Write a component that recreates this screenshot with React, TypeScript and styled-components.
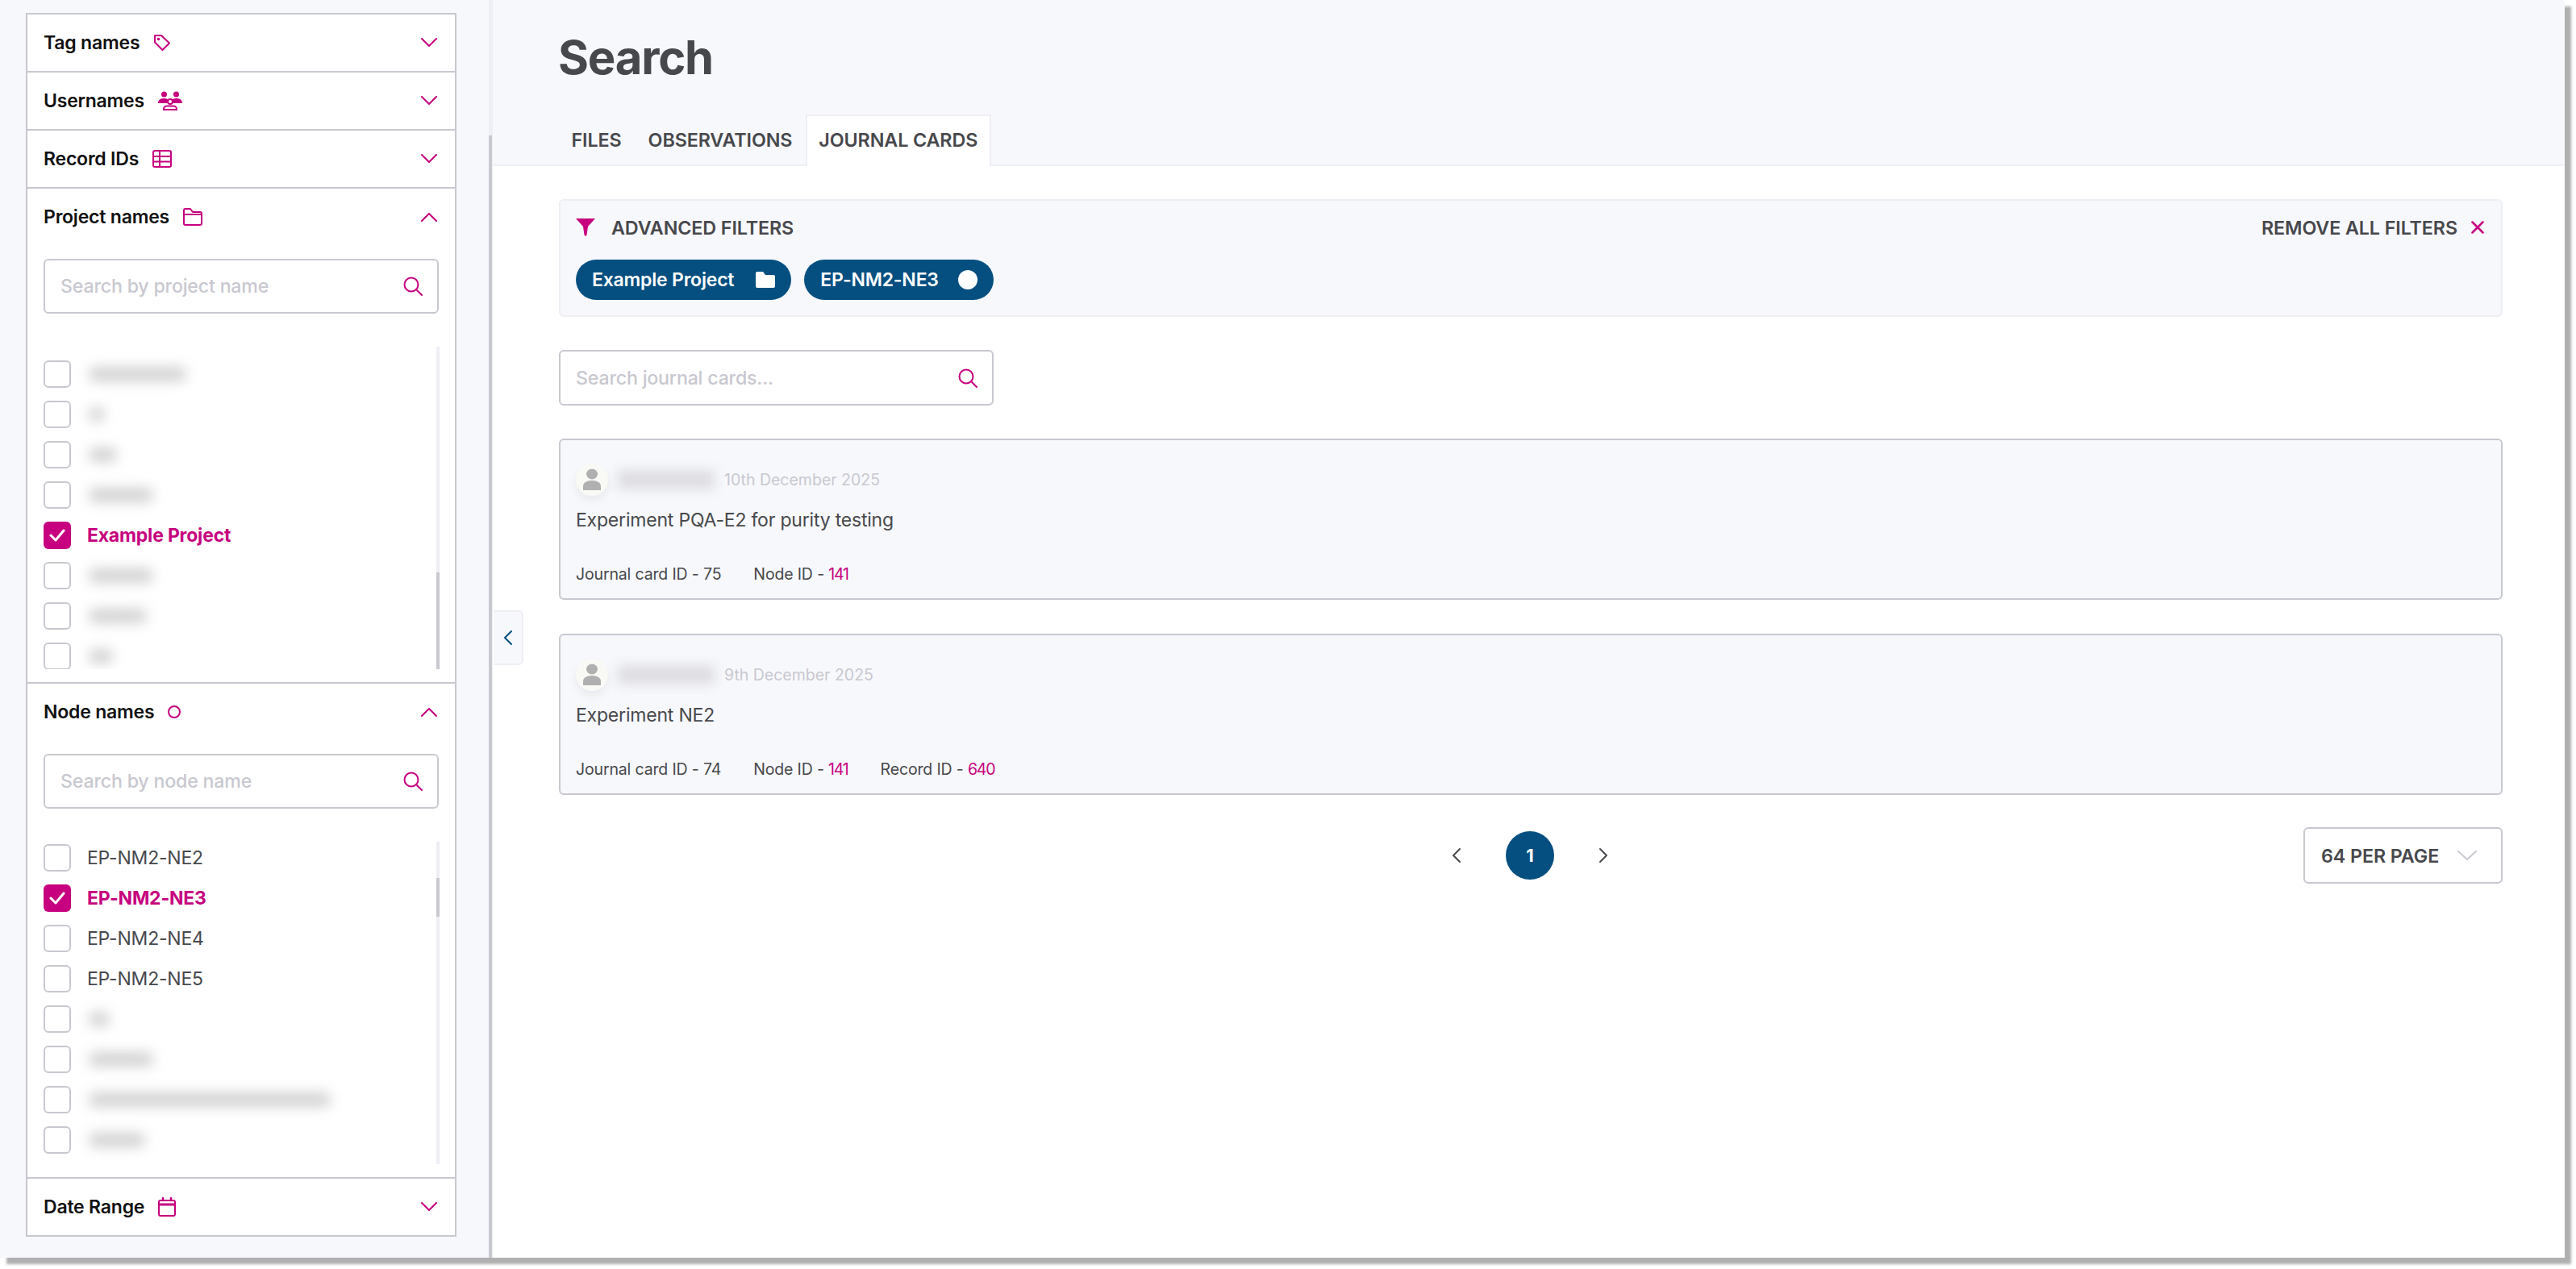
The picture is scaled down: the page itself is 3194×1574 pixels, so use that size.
import React, {FC, ReactNode} from 'react'
import styled, {createGlobalStyle} from 'styled-components'

const MAGENTA = '#c6007e'
const BLUE = '#054f80'
const INK = '#47484c'
const LINE = '#c8c8d0'
const SOFT = '#eeeef4'
const TINT = '#f7f8fc'
const FONT = `Inter, "Open Sans", "Liberation Sans", sans-serif`

const GlobalStyle = createGlobalStyle`
html, body {
  margin:0;
  padding:0;
  background:#fff;
  font-family:${FONT};
  color:${INK};
}
* {
  box-sizing:border-box;
}
`

const Page = styled.div`
width:3194px;
height:1574px;
background:#fff;
`

const Window = styled.div`
position:relative;
display:flex;
width:3180px;
height:1560px;
background:#fff;
box-shadow:8px 8px 3px #b0b0b0;
`

const Sidebar = styled.aside`
width:606px;
flex:none;
padding:16px 40px 0 32px;
background:${TINT};
`

const PageTrack = styled.div`
width:5px;
flex:none;
background:${SOFT};
padding-top:168px;
div {
  width:4px;
  height:100%;
  background:${LINE};
}
`

const Accordion = styled.div`
width:534px;
border:2px solid ${LINE};
background:#fff;
`

const Section = styled.section`
& + & {
  border-top:2px solid ${LINE};
}
`

const SectionHeader = styled.header`
height:70px;
padding:0 22px 0 20px;
display:flex;
align-items:center;
font-size:23px;
font-weight:600;
letter-spacing:-0.2px;
color:#111;
span {
  margin:0 17px 1px 0;
}
svg.chevron {
  margin-left:auto;
}
`

const Panel = styled.div`
padding:17px 20px 16px;
`

const SearchBox = styled.label<{$width?: number; $height?: number; $top?: number}>`
display:flex;
align-items:center;
width:${p => p.$width ? `${p.$width}px` : '100%'};
height:${p => p.$height || 68}px;
margin-top:${p => p.$top || 0}px;
padding:0 18px 0 19px;
border:2px solid ${LINE};
border-radius:6px;
background:#fff;
input {
  flex:1;
  min-width:0;
  padding:0;
  border:none;
  outline:none;
  background:none;
  font-family:${FONT};
  font-size:23.2px;
  font-weight:500;
  letter-spacing:-0.2px;
  &::placeholder {
    color:${LINE};
    opacity:1;
  }
}
`

const ListWrap = styled.div`
display:flex;
height:400px;
margin-top:41px;
margin-right:-1px;
`

const Rows = styled.ul<{$top: number}>`
flex:1;
margin:0;
padding:${p => p.$top}px 0 0;
list-style:none;
display:flex;
flex-direction:column;
gap:16px;
overflow:hidden;
`

const Row = styled.li<{$on?: boolean}>`
display:flex;
align-items:center;
gap:20px;
height:34px;
font-size:23px;
letter-spacing:-0.2px;
font-weight:${p => p.$on ? 700 : 400};
color:${p => p.$on ? MAGENTA : INK};
`

const Box = styled.span<{$on?: boolean}>`
width:34px;
height:34px;
flex:none;
display:flex;
align-items:center;
justify-content:center;
border-radius:6px;
border:${p => p.$on ? 'none' : `2px solid ${LINE}`};
background:${p => p.$on ? MAGENTA : '#fff'};
`

const Blurred = styled.span<{$w: number}>`
display:block;
width:${p => p.$w}px;
height:18px;
margin-left:2px;
border-radius:8px;
background:#d2d2d2;
filter:blur(8px);
`

const Track = styled.div<{$top: number}>`
width:4px;
flex:none;
background:${SOFT};
padding-top:${p => p.$top}px;
`

const Thumb = styled.div<{$h: number}>`
height:${p => p.$h}px;
background:${LINE};
`

const CollapseTab = styled.button`
position:absolute;
left:612px;
top:757px;
width:37px;
height:68px;
padding:0;
display:flex;
align-items:center;
justify-content:center;
background:${TINT};
border:2px solid ${SOFT};
border-left:none;
border-radius:0 6px 6px 0;
`

const Main = styled.main`
flex:1;
min-width:0;
`

const PageHeader = styled.header`
height:206px;
padding:36px 0 0 81px;
background:${TINT};
border-bottom:2px solid ${SOFT};
`

const Title = styled.h1`
margin:0 0 36px;
font-size:58px;
line-height:70px;
font-weight:700;
letter-spacing:-1.2px;
color:${INK};
`

const Tabs = styled.nav`
display:flex;
height:64px;
`

const Tab = styled.div<{$active?: boolean}>`
height:64px;
padding:0 14.5px 3px;
display:flex;
align-items:center;
font-size:23.3px;
font-weight:600;
letter-spacing:-0.1px;
border:2px solid ${p => p.$active ? SOFT : 'transparent'};
border-bottom:none;
background:${p => p.$active ? '#fff' : 'transparent'};
`

const Content = styled.div`
padding:41px 77px 0 82px;
`

const FilterPanel = styled.div`
height:146px;
padding:17px 19px 0;
background:${TINT};
border:2px solid ${SOFT};
border-radius:6px;
`

const FilterTop = styled.div`
display:flex;
align-items:center;
justify-content:space-between;
height:32px;
font-size:23.3px;
font-weight:600;
letter-spacing:-0.1px;
`

const FilterLabel = styled.div`
display:flex;
align-items:center;
gap:20px;
`

const RemoveAll = styled.div`
display:flex;
align-items:center;
gap:17px;
margin-right:2px;
`

const Chips = styled.div`
display:flex;
gap:16px;
margin-top:24px;
`

const Chip = styled.div<{$gap: number}>`
display:flex;
align-items:center;
gap:${p => p.$gap}px;
height:50px;
padding:0 20px;
border-radius:25px;
background:${BLUE};
color:#fff;
font-size:23px;
font-weight:600;
letter-spacing:-0.2px;
`

const CardList = styled.div`
display:flex;
flex-direction:column;
gap:42px;
margin-top:41px;
`

const Card = styled.article`
height:200px;
padding:29px 19px 0;
background:${TINT};
border:2px solid ${LINE};
border-radius:6px;
`

const CardTop = styled.div`
display:flex;
align-items:center;
height:40px;
`

const Avatar = styled.div`
width:40px;
height:40px;
flex:none;
display:flex;
align-items:center;
justify-content:center;
border-radius:50%;
background:#f9f9f5;
box-shadow:0 6px 12px rgba(0,0,0,.06);
`

const UserName = styled.div`
width:120px;
height:24px;
margin:0 12px;
background:#dedee2;
filter:blur(7px);
`

const CardDate = styled.span`
font-size:19.5px;
color:${LINE};
`

const CardTitle = styled.div`
margin-top:13px;
font-size:23px;
line-height:34px;
letter-spacing:-0.2px;
`

const CardMeta = styled.div`
display:flex;
gap:40px;
margin-top:36px;
font-size:19.5px;
line-height:28px;
letter-spacing:-0.15px;
b {
  font-weight:400;
  letter-spacing:-1.2px;
  color:${MAGENTA};
}
`

const PagerRow = styled.div`
display:grid;
grid-template-columns:1fr auto 1fr;
align-items:center;
margin-top:40px;
height:70px;
`

const Pager = styled.div`
grid-column:2;
display:flex;
align-items:center;
gap:55px;
margin-right:2px;
`

const PageDot = styled.div`
width:60px;
height:60px;
display:flex;
align-items:center;
justify-content:center;
border-radius:50%;
background:${BLUE};
color:#fff;
font-size:22px;
font-weight:700;
`

const PerPage = styled.div`
justify-self:end;
width:247px;
height:70px;
padding:0 30px 0 20px;
display:flex;
align-items:center;
justify-content:space-between;
border:2px solid ${LINE};
border-radius:6px;
font-size:23.3px;
font-weight:600;
letter-spacing:-0.1px;
`

const Svg = styled.svg`
flex:none;
`

const Stroke: FC<{w: number; h: number; color?: string; sw?: number; className?: string; children: ReactNode}> = ({w, h, color = MAGENTA, sw = 2, className, children}) => (
  <Svg className={className} width={w} height={h} viewBox={`0 0 ${w} ${h}`} fill='none' stroke={color} strokeWidth={sw} strokeLinecap='round' strokeLinejoin='round'>
    {children}
  </Svg>
)

const Chevron: FC<{up?: boolean}> = ({up}) => (
  <Stroke className='chevron' w={20} h={12}>
    <path d={up ? 'M1 11 10 2l9 9' : 'M1 1l9 9 9-9'} />
  </Stroke>
)

const TagIcon = () => (
  <Stroke w={22} h={22}>
    <path d='M2 2h8l10 9.5-8.500 8.500L2 10.500z' />
    <circle cx={6.5} cy={6.5} r={0.8} fill={MAGENTA} />
  </Stroke>
)

const UsersIcon = () => (
  <Svg width={30} height={24} viewBox='0 0 30 24'>
    <g fill={MAGENTA}>
      <circle cx={7.5} cy={4} r={3.5} />
      <circle cx={22.5} cy={4} r={3.5} />
      <path d='M0 15c0-4 3-6 7-6s5 1 5.5 2a5 5 0 0 0-1.5 4z' />
      <path d='M30 15c0-4-3-6-7-6s-5 1-5.5 2a5 5 0 0 1 1.5 4z' />
    </g>
    <g fill='none' stroke={MAGENTA} strokeWidth={2}>
      <circle cx={15} cy={13} r={3} />
      <path d='M7 23v-1c0-2 2-3.5 4-3.5h8c2 0 4 1.5 4 3.5v1z' />
    </g>
  </Svg>
)

const TableIcon = () => (
  <Stroke w={24} h={22}>
    <rect x={1} y={1} width={22} height={20} rx={2} />
    <path d='M9 1v20M1 8h22M1 14.5h22' />
  </Stroke>
)

const FolderIcon = () => (
  <Stroke w={24} h={22}>
    <path d='M1 3a2 2 0 0 1 2-2h6l3 4h9a2 2 0 0 1 2 2v12a2 2 0 0 1-2 2H3a2 2 0 0 1-2-2z' />
    <path d='M1 8h22' />
  </Stroke>
)

const CircleIcon = () => (
  <Stroke w={16} h={16}>
    <circle cx={8} cy={8} r={7} />
  </Stroke>
)

const CalendarIcon = () => (
  <Stroke w={22} h={24}>
    <rect x={1} y={4} width={20} height={19} rx={2} />
    <path d='M1 9h20' strokeWidth={3} />
    <path d='M6 1v3M16 1v3' strokeWidth={2.5} />
  </Stroke>
)

const SearchIcon = () => (
  <Stroke w={24} h={24}>
    <circle cx={10} cy={10} r={8.5} />
    <path d='M16 16l7 7' />
  </Stroke>
)

const CheckIcon = () => (
  <Stroke w={20} h={16} color='#fff' sw={3}>
    <path d='M2 8l6 6L18 2' />
  </Stroke>
)

const Funnel = () => (
  <Svg width={24} height={22} viewBox='0 0 24 22' fill={MAGENTA}>
    <path d='M0 0h24l-9 10-1.5 10.5Q12 23 10.5 20.5L9 10z' />
  </Svg>
)

const CloseIcon = () => (
  <Stroke w={16} h={16} sw={2.5}>
    <path d='M1.5 1.5l13 13M14.5 1.5l-13 13' />
  </Stroke>
)

const SolidFolder = () => (
  <Svg width={24} height={20} viewBox='0 0 24 20' fill='#fff'>
    <path d='M0 2a2 2 0 0 1 2-2h7l3 4h10a2 2 0 0 1 2 2v12a2 2 0 0 1-2 2H2a2 2 0 0 1-2-2z' />
  </Svg>
)

const SolidCircle = () => (
  <Svg width={24} height={24} viewBox='0 0 24 24' fill='#fff'>
    <circle cx={12} cy={12} r={12} />
  </Svg>
)

const PersonIcon = () => (
  <Svg width={24} height={28} viewBox='0 0 24 28' fill='#b0b0b0'>
    <ellipse cx={12} cy={7} rx={7} ry={6.5} />
    <path d='M1 27v-5c0-4 4-7 11-7s11 3 11 7v5z' />
  </Svg>
)

const Arrow: FC<{left?: boolean; color?: string}> = ({left, color = INK}) => (
  <Stroke w={12} h={20} color={color}>
    <path d={left ? 'M10 2 2 10l8 8' : 'M2 2l8 8-8 8'} />
  </Stroke>
)

type Item = {name?: string; blur?: number; on?: boolean}

const projects: Item[] = [
  {blur: 121}, {blur: 20}, {blur: 35}, {blur: 80},
  {name: 'Example Project', on: true},
  {blur: 80}, {blur: 72}, {blur: 30},
]

const nodes: Item[] = [
  {name: 'EP-NM2-NE2'},
  {name: 'EP-NM2-NE3', on: true},
  {name: 'EP-NM2-NE4'},
  {name: 'EP-NM2-NE5'},
  {blur: 26}, {blur: 80}, {blur: 300}, {blur: 70},
]

const CheckList: FC<{items: Item[]; top: number; thumbTop: number; thumbH: number}> = ({items, top, thumbTop, thumbH}) => (
  <ListWrap>
    <Rows $top={top}>
      {items.map((it, i) => (
        <Row key={i} $on={it.on}>
          <Box $on={it.on}>{it.on && <CheckIcon />}</Box>
          {it.name || <Blurred $w={it.blur || 40} />}
        </Row>
      ))}
    </Rows>
    <Track $top={thumbTop}><Thumb $h={thumbH} /></Track>
  </ListWrap>
)

const App: FC = () => {
  return (
    <Page>
      <GlobalStyle />
      <Window>
        <Sidebar>
          <Accordion>
            <Section>
              <SectionHeader><span>Tag names</span><TagIcon /><Chevron /></SectionHeader>
            </Section>
            <Section>
              <SectionHeader><span>Usernames</span><UsersIcon /><Chevron /></SectionHeader>
            </Section>
            <Section>
              <SectionHeader><span>Record IDs</span><TableIcon /><Chevron /></SectionHeader>
            </Section>
            <Section>
              <SectionHeader><span>Project names</span><FolderIcon /><Chevron up /></SectionHeader>
              <Panel>
                <SearchBox>
                  <input placeholder='Search by project name' />
                  <SearchIcon />
                </SearchBox>
                <CheckList items={projects} top={17} thumbTop={280} thumbH={120} />
              </Panel>
            </Section>
            <Section>
              <SectionHeader><span>Node names</span><CircleIcon /><Chevron up /></SectionHeader>
              <Panel>
                <SearchBox>
                  <input placeholder='Search by node name' />
                  <SearchIcon />
                </SearchBox>
                <CheckList items={nodes} top={3} thumbTop={45} thumbH={48} />
              </Panel>
            </Section>
            <Section>
              <SectionHeader><span>Date Range</span><CalendarIcon /><Chevron /></SectionHeader>
            </Section>
          </Accordion>
        </Sidebar>
        <PageTrack><div /></PageTrack>
        <CollapseTab><Arrow left color={BLUE} /></CollapseTab>
        <Main>
          <PageHeader>
            <Title>Search</Title>
            <Tabs>
              <Tab>FILES</Tab>
              <Tab>OBSERVATIONS</Tab>
              <Tab $active>JOURNAL CARDS</Tab>
            </Tabs>
          </PageHeader>
          <Content>
            <FilterPanel>
              <FilterTop>
                <FilterLabel><Funnel />ADVANCED FILTERS</FilterLabel>
                <RemoveAll>REMOVE ALL FILTERS<CloseIcon /></RemoveAll>
              </FilterTop>
              <Chips>
                <Chip $gap={27}>Example Project<SolidFolder /></Chip>
                <Chip $gap={24}>EP-NM2-NE3<SolidCircle /></Chip>
              </Chips>
            </FilterPanel>
            <SearchBox $width={539} $height={69} $top={41}>
              <input placeholder='Search journal cards...' />
              <SearchIcon />
            </SearchBox>
            <CardList>
              <Card>
                <CardTop>
                  <Avatar><PersonIcon /></Avatar>
                  <UserName />
                  <CardDate>10th December 2025</CardDate>
                </CardTop>
                <CardTitle>Experiment PQA-E2 for purity testing</CardTitle>
                <CardMeta>
                  <span>Journal card ID - 75</span>
                  <span>Node ID - <b>141</b></span>
                </CardMeta>
              </Card>
              <Card>
                <CardTop>
                  <Avatar><PersonIcon /></Avatar>
                  <UserName />
                  <CardDate>9th December 2025</CardDate>
                </CardTop>
                <CardTitle>Experiment NE2</CardTitle>
                <CardMeta>
                  <span>Journal card ID - 74</span>
                  <span>Node ID - <b>141</b></span>
                  <span>Record ID - <b>640</b></span>
                </CardMeta>
              </Card>
            </CardList>
            <PagerRow>
              <Pager>
                <Arrow left />
                <PageDot>1</PageDot>
                <Arrow />
              </Pager>
              <PerPage>
                64 PER PAGE
                <Stroke w={24} h={12} color={LINE}><path d='M1 1l11 10L23 1' /></Stroke>
              </PerPage>
            </PagerRow>
          </Content>
        </Main>
      </Window>
    </Page>
  )
}

export default App
